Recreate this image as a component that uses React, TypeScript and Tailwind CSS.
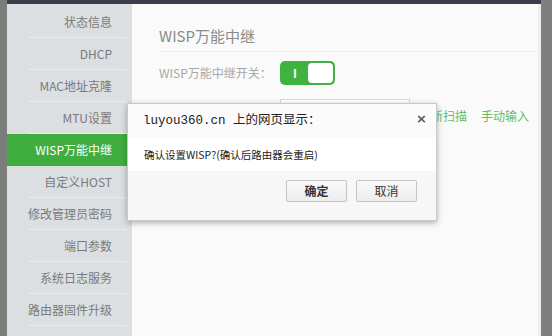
const menu = [
  '状态信息',
  'DHCP',
  'MAC地址克隆',
  'MTU设置',
  'WISP万能中继',
  '自定义HOST',
  '修改管理员密码',
  '端口参数',
  '系统日志服务',
  '路由器固件升级',
];

const ACTIVE = 'WISP万能中继';

function Sidebar() {
  return (
    <div className="flex w-[125px] flex-col bg-[#dcdfe2] pt-[2px]">
      {menu.map((item) => (
        <div key={item} className="flex h-[32px] flex-col">
          <div
            className={
              item === ACTIVE
                ? 'flex h-[32px] w-[120px] items-center justify-end bg-[#3fae3f] pr-[15px] text-[12px] text-white'
                : 'flex h-[31px] w-[120px] items-center justify-end pr-[15px] text-[12px] text-[#7a7a7a]'
            }
          >
            {item}
          </div>
          {item !== ACTIVE && <div className="ml-[22px] h-px w-[98px] bg-[#e9ebed]" />}
        </div>
      ))}
    </div>
  );
}

function Toggle() {
  return (
    <div className="flex h-[24px] w-[55px] items-center rounded-[5px] bg-[#3fb23f] p-[2px]">
      <span className="w-[26px] text-center text-[12px] font-bold text-white">I</span>
      <span className="h-[20px] w-[25px] rounded-[4px] bg-white" />
    </div>
  );
}

function Content() {
  return (
    <div className="flex flex-1 flex-col bg-[#fafafa] pl-[27px] pt-[20px]">
      <div className="text-[15px] leading-[24px] text-[#8a8a8a]">WISP万能中继</div>
      <div className="mt-[3px] h-px w-full bg-[#ececec]" />
      <div className="mt-[9px] flex items-center">
        <span className="w-[121px] whitespace-nowrap text-[12px] text-[#a8a8a8]">WISP万能中继开关：</span>
        <Toggle />
      </div>
      <div className="mt-[14px] flex items-start">
        <div className="ml-[121px] h-[30px] w-[130px] border border-[#dadada] bg-white" />
        <div className="mt-[8px] flex gap-[14px] pl-[9px] text-[12px] text-[#5fbf5f]">
          <span>重新扫描</span>
          <span>手动输入</span>
        </div>
      </div>
    </div>
  );
}

function Dialog() {
  return (
    <div className="absolute left-[127px] top-[103px] flex w-[310px] flex-col border border-[#c8c8c8] bg-white shadow-[0_2px_6px_rgba(0,0,0,0.3)]">
      <div className="relative flex h-[34px] items-center bg-[#fbfbfb] pl-[15px] font-['Liberation_Mono','Noto_Sans_CJK_SC',monospace] text-[12.5px] text-[#222]">
        luyou360.cn 上的网页显示：
        <span className="absolute right-[9px] top-[5px] font-['DejaVu_Sans',sans-serif] text-[13px] font-bold text-[#555]">×</span>
      </div>
      <div className="flex h-[33px] items-center bg-white pl-[16px] text-[10.5px] text-[#222]">
        确认设置WISP?(确认后路由器会重启)
      </div>
      <div className="flex h-[49px] items-start justify-end gap-[9px] bg-[#f7f7f7] pr-[19px] pt-[9px]">
        <button className="h-[22px] w-[61px] rounded-[2px] border border-[#c4c4c4] bg-gradient-to-b from-[#fafafa] to-[#ececec] text-[12px] font-bold text-[#333]">
          确定
        </button>
        <button className="h-[22px] w-[61px] rounded-[2px] border border-[#c4c4c4] bg-gradient-to-b from-[#fafafa] to-[#ececec] text-[12px] text-[#333]">
          取消
        </button>
      </div>
    </div>
  );
}

export default function App() {
  return (
    <div className="relative flex h-[336px] w-[552px] overflow-hidden bg-[#7d7f7d] font-['Noto_Sans_CJK_SC','Noto_Sans',sans-serif]">
      <div className="w-[7px] bg-[#7b7d7b]" />
      <div className="flex w-[534px] flex-col">
        <div className="h-[4px] bg-[#3b3e4a]" />
        <div className="flex flex-1">
          <Sidebar />
          <Content />
          <div className="w-[3px] bg-[#efefef]" />
        </div>
      </div>
      <div className="flex-1 bg-[#7f7f7f]" />
      <Dialog />
    </div>
  );
}
